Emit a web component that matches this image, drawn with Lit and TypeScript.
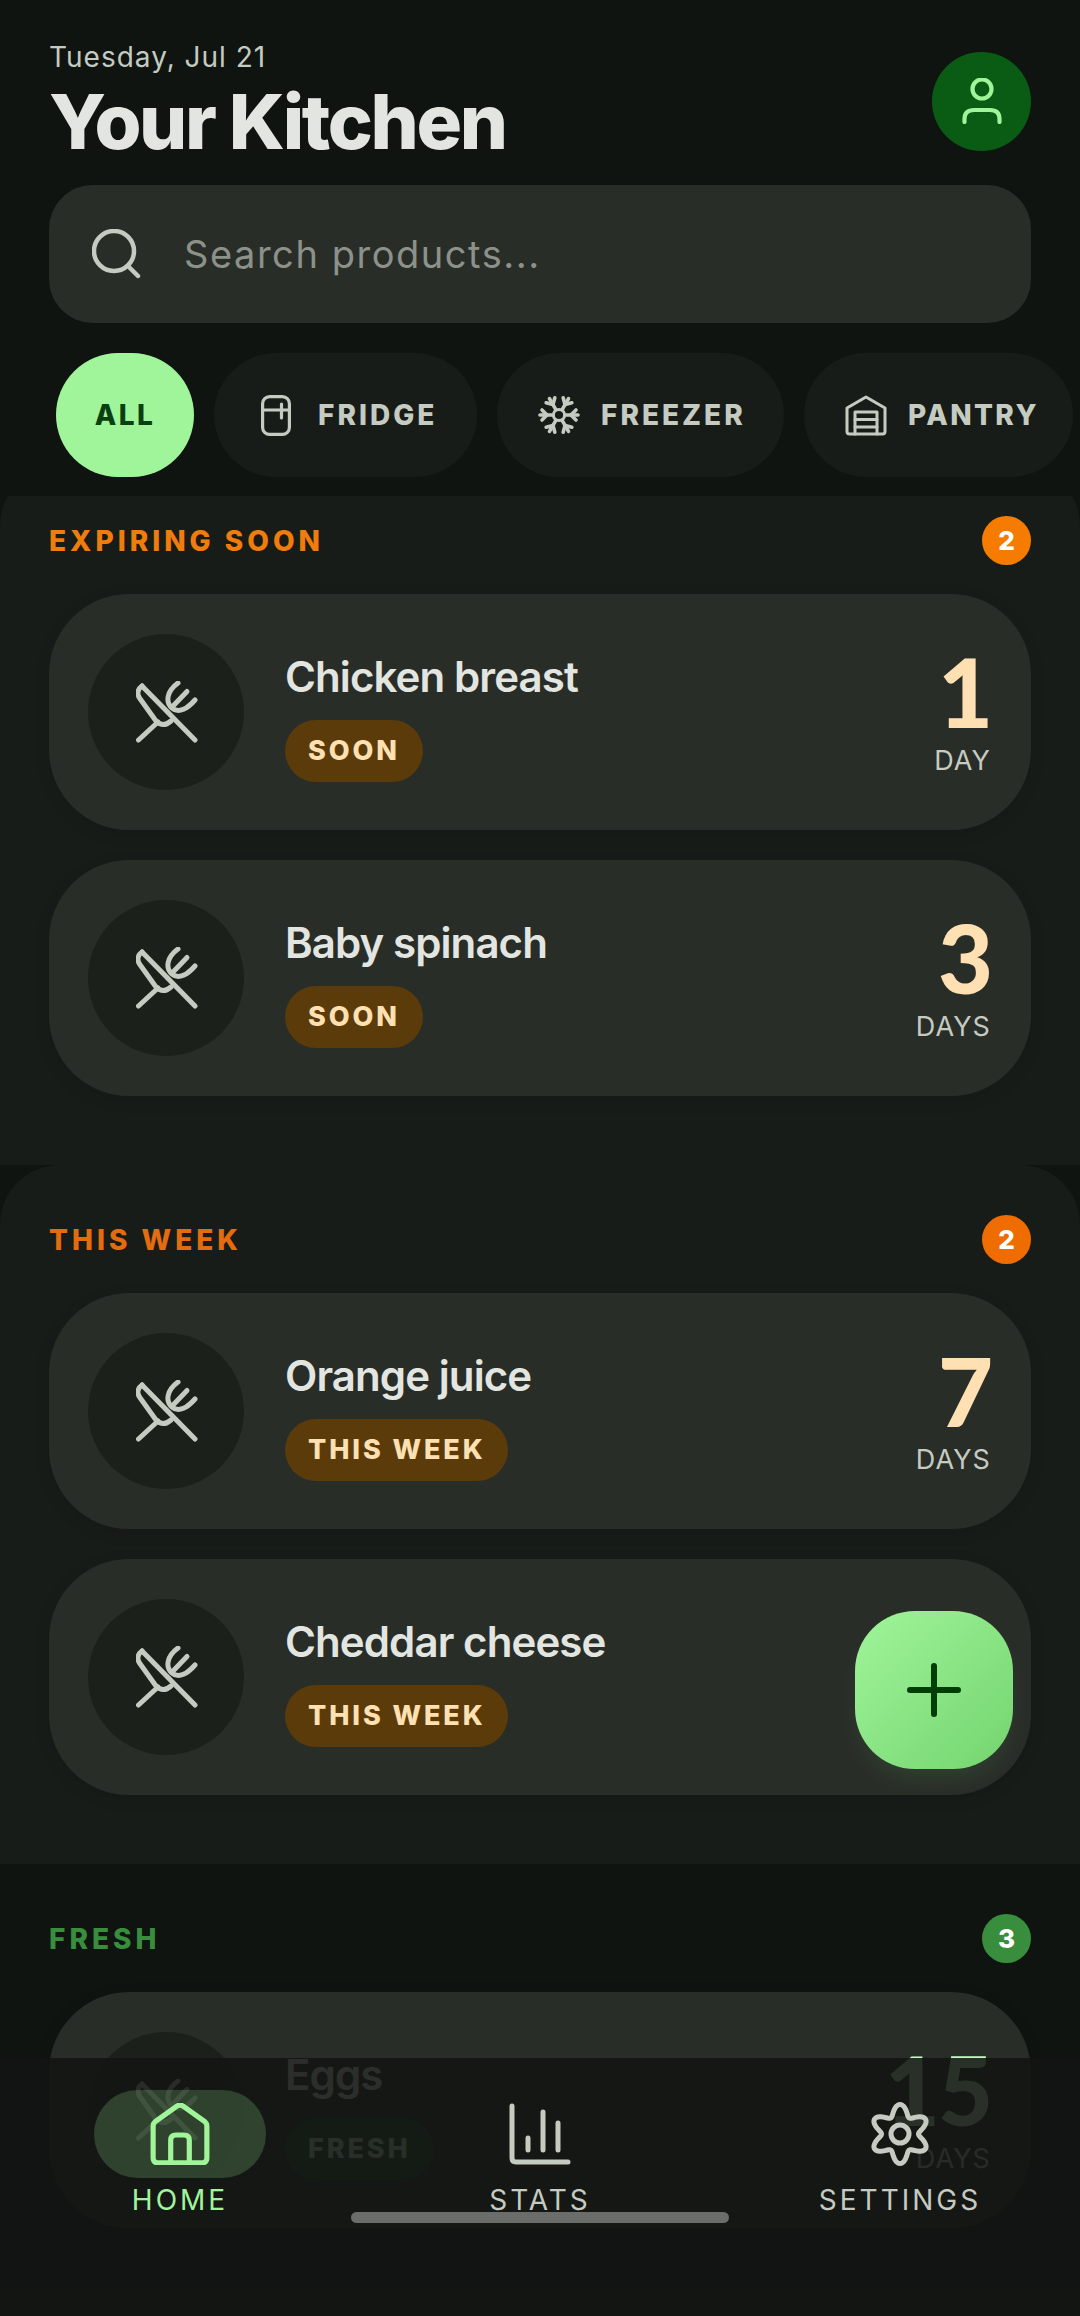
import { LitElement, html, css, svg } from 'lit'
import { customElement } from 'lit/decorators.js'
import { classMap } from 'lit/directives/class-map.js'

type Product = { name: string; tag: string; num: string; unit: string }
type Group = { title: string; tone: string; items: Product[]; count: number }

const groups: Group[] = [
  {
    title: 'EXPIRING SOON',
    tone: 'warn',
    count: 2,
    items: [
      { name: 'Chicken breast', tag: 'SOON', num: '1', unit: 'DAY' },
      { name: 'Baby spinach', tag: 'SOON', num: '3', unit: 'DAYS' },
    ],
  },
  {
    title: 'THIS WEEK',
    tone: 'week',
    count: 2,
    items: [
      { name: 'Orange juice', tag: 'THIS WEEK', num: '7', unit: 'DAYS' },
      { name: 'Cheddar cheese', tag: 'THIS WEEK', num: '5', unit: 'DAYS' },
    ],
  },
  {
    title: 'FRESH',
    tone: 'fresh',
    count: 3,
    items: [{ name: 'Eggs', tag: 'FRESH', num: '15', unit: 'DAYS' }],
  },
]

const fork = html`<svg class="fork" width="62" height="62" viewBox="0 0 62 62" fill="none" stroke="currentColor" stroke-width="5" stroke-linecap="round" stroke-linejoin="round">
  <path d="M6 5 L59 59" />
  <path d="M6 5 C1.5 8 1 13 3.5 17 L20 40 Q27 47 35 40" />
  <path d="M2.5 59 L22 41" />
  <path d="M42 2 C31 10 29 21 36 27 C43 33 52 27 59 19" />
  <path d="M51 10.5 L38 24" />
</svg>`

const fridge = html`<svg width="30" height="41" viewBox="0 0 30 41" fill="none" stroke="currentColor" stroke-width="3.2" stroke-linecap="round">
  <rect x="1.6" y="1.6" width="26.8" height="37.8" rx="7" />
  <path d="M1.6 15 H28.4" />
  <path d="M20.5 9 V23" />
</svg>`

const arms = [0, 60, 120, 180, 240, 300]
const snow = html`<svg width="42" height="42" viewBox="-21 -21 42 42" fill="none" stroke="currentColor" stroke-width="3.6" stroke-linecap="round">
  <circle r="5.6" stroke-width="3" />
  ${arms.map(
    (a) => svg`<g transform=${`rotate(${a + 90})`}>
      <path d="M0 -6 V-19" />
      <path d="M-5 -17 L0 -12 L5 -17" />
    </g>`,
  )}
</svg>`

const garage = html`<svg width="42" height="41" viewBox="0 0 42 41" fill="none" stroke="currentColor" stroke-width="3" stroke-linecap="round" stroke-linejoin="round">
  <path d="M2 13 L21 2 L40 13 V36.5 Q40 39 37.5 39 H4.5 Q2 39 2 36.5 Z" />
  <path d="M10 39 V17 H32 V39" />
  <path d="M10 24.5 H32 M10 32 H32" />
</svg>`

const home = html`<svg width="60" height="62" viewBox="0 0 58 60" fill="none" stroke="currentColor" stroke-width="5" stroke-linejoin="round" stroke-linecap="round">
  <path d="M3 22 C3 20 4 19 5 18 L26 3 Q29 1 32 3 L53 18 C54 19 55 20 55 22 V53 Q55 58 50 58 H8 Q3 58 3 53 Z" />
  <path d="M20 58 V36 Q20 31 25 31 H33 Q38 31 38 36 V58" />
</svg>`

const stats = html`<svg width="62" height="62" viewBox="0 0 62 62" fill="none" stroke="currentColor" stroke-width="5" stroke-linecap="round" stroke-linejoin="round">
  <path d="M3 3 V55 Q3 59 7 59 H59" />
  <path d="M19 35 V47" />
  <path d="M34 9 V47" />
  <path d="M49 20 V47" />
</svg>`

// six lobed outline, easier to generate than to write by hand
const gearPath = () => {
  const pts: string[] = []
  for (let i = 0; i < 180; i++) {
    const t = (i / 180) * Math.PI * 2
    const r = 24 + 5.5 * Math.cos(6 * t)
    pts.push(`${(r * Math.sin(t)).toFixed(2)} ${(-r * Math.cos(t)).toFixed(2)}`)
  }
  return `M${pts.join(' L')} Z`
}

const gear = html`<svg width="66" height="66" viewBox="-33 -33 66 66" fill="none" stroke="currentColor" stroke-width="5" stroke-linejoin="round">
  <path d=${gearPath()} />
  <circle r="9" />
</svg>`

@customElement('app-root')
export class AppRoot extends LitElement {
  static styles = css`
    :host {
      display: block;
      width: 1080px;
      height: 2316px;
      font-family: Inter, 'Noto Sans', sans-serif;
    }

    .page {
      position: relative;
      width: 1080px;
      height: 2316px;
      overflow: hidden;
      background: #0f1411;
      display: flex;
      flex-direction: column;
    }

    header {
      display: flex;
      justify-content: space-between;
      align-items: center;
      margin-top: 39px;
      padding: 0 49px;
    }

    .date {
      font-size: 28px;
      line-height: 36px;
      letter-spacing: 1px;
      color: #c5cbc0;
    }

    h1 {
      margin: 4px 0 0;
      font-size: 76px;
      line-height: 84px;
      font-weight: 800;
      letter-spacing: -2.4px;
      color: #e3e6e0;
    }

    .avatar {
      width: 99px;
      height: 99px;
      border-radius: 50%;
      background: #0a5c15;
      color: #a0f59a;
      display: flex;
      align-items: center;
      justify-content: center;
    }

    .search {
      display: flex;
      align-items: center;
      gap: 42px;
      height: 138px;
      margin: 22px 49px 0;
      padding: 0 43px;
      border-radius: 44px;
      background: #292d28;
      color: #c5cbc0;
    }

    .search span {
      font-size: 38px;
      letter-spacing: 1.55px;
      color: #8c918a;
    }

    .chips {
      display: flex;
      gap: 20px;
      height: 124px;
      margin-top: 30px;
      padding-left: 56px;
    }

    .chip {
      display: flex;
      align-items: center;
      gap: 20px;
      height: 124px;
      flex: none;
      box-sizing: border-box;
      padding-left: 40px;
      border-radius: 62px;
      background: #181c18;
      color: #c5cbc0;
      font-size: 28px;
      font-weight: 800;
      letter-spacing: 3px;
    }

    .chip.on {
      justify-content: center;
      padding-left: 0;
      background: #a0f59a;
      color: #0a3f0f;
      letter-spacing: 2.4px;
    }

    .ic {
      width: 44px;
      display: flex;
      justify-content: center;
    }

    .all {
      width: 138px;
    }

    .fridge {
      width: 263px;
    }

    .freezer {
      width: 287px;
    }

    .pantry {
      width: 269px;
      letter-spacing: 2.4px;
    }

    .scroll {
      flex: 1;
      min-height: 0;
      margin-top: 19px;
      overflow: hidden;
    }

    section {
      margin-top: 0;
      padding: 50px 49px 69px;
      border-radius: 60px 60px 0 0;
      background: #181c18;
    }

    section:first-child {
      margin-top: -30px;
    }

    section.fresh {
      background: transparent;
    }

    .head {
      display: flex;
      justify-content: space-between;
      align-items: center;
      height: 48px;
      margin-bottom: 30px;
      font-size: 28px;
      font-weight: 800;
      letter-spacing: 4px;
      color: #f07c0c;
    }

    .head span:first-child {
      margin-top: 2px;
    }

    .week .head {
      color: #e46c10;
    }

    .fresh .head {
      color: #388e3c;
    }

    .count {
      width: 49px;
      height: 49px;
      border-radius: 50%;
      background: #f57c00;
      color: #fff;
      display: flex;
      align-items: center;
      justify-content: center;
      font-size: 26px;
      letter-spacing: 0;
    }

    .week .count {
      background: #ef6c00;
    }

    .fresh .count {
      background: #388e3c;
    }

    .list {
      display: flex;
      flex-direction: column;
      gap: 30px;
    }

    .card {
      display: flex;
      align-items: center;
      height: 236px;
      box-sizing: border-box;
      padding: 0 40px 0 39px;
      border-radius: 80px;
      background: #292d28;
      box-shadow: 0 4px 16px rgba(0, 0, 0, 0.1);
    }

    .thumb {
      width: 156px;
      height: 156px;
      flex: none;
      border-radius: 50%;
      background: #1c201b;
      color: #c5cbc0;
      display: flex;
      align-items: center;
      justify-content: center;
    }

    .fork {
      margin-left: 2px;
    }

    .info {
      flex: 1;
      margin-left: 41px;
    }

    .name {
      font-size: 42px;
      line-height: 68px;
      font-weight: 600;
      letter-spacing: -0.9px;
      color: #e3e6e0;
    }

    .tag {
      display: inline-flex;
      align-items: center;
      height: 62px;
      margin-top: 9px;
      padding: 0 23px;
      border-radius: 31px;
      background: #5c3b0a;
      color: #ffe0b2;
      font-size: 27px;
      font-weight: 800;
      letter-spacing: 2.9px;
    }

    .fresh .tag {
      background: #1b4d20;
      color: #c8e6c9;
    }

    .left {
      margin-top: -4px;
      text-align: right;
    }

    .num {
      font-family: Lato, Inter, sans-serif;
      font-size: 95px;
      line-height: 100px;
      font-weight: 900;
      letter-spacing: -2px;
      color: #ffe0b2;
    }

    .fresh .num {
      color: #c8f7c5;
    }

    .unit {
      margin-top: 2px;
      font-size: 27px;
      line-height: 36px;
      letter-spacing: 1.1px;
      color: #c5cbc0;
    }

    .fab {
      position: absolute;
      left: 855px;
      top: 1611px;
      width: 158px;
      height: 158px;
      border-radius: 60px;
      background: linear-gradient(135deg, #a0f59a, #74d46f);
      box-shadow: 0 14px 24px -6px rgba(110, 220, 105, 0.12);
      color: #003d07;
      display: flex;
      align-items: center;
      justify-content: center;
    }

    nav {
      position: absolute;
      left: 0;
      right: 0;
      top: 2058px;
      bottom: 0;
      display: grid;
      grid-template-columns: repeat(3, 360px);
      align-content: start;
      padding-top: 32px;
      background: rgba(18, 21, 18, 0.88);
    }

    .tab {
      display: flex;
      flex-direction: column;
      align-items: center;
      color: #c5cbc0;
      font-size: 28px;
      line-height: 34px;
      letter-spacing: 3px;
    }

    .tab.on {
      color: #a0f59a;
    }

    .pill {
      width: 172px;
      height: 88px;
      margin-bottom: 5px;
      border-radius: 44px;
      display: flex;
      align-items: center;
      justify-content: center;
    }

    .on .pill {
      background: rgba(160, 245, 154, 0.2);
    }

    .grabber {
      position: absolute;
      left: 351px;
      top: 2212px;
      width: 378px;
      height: 11px;
      border-radius: 6px;
      background: #6b6d6a;
    }
  `

  private renderCard(p: Product) {
    return html`
      <div class="card">
        <div class="thumb">${fork}</div>
        <div class="info">
          <div class="name">${p.name}</div>
          <div class="tag">${p.tag}</div>
        </div>
        <div class="left">
          <div class="num">${p.num}</div>
          <div class="unit">${p.unit}</div>
        </div>
      </div>
    `
  }

  private renderGroup(g: Group) {
    return html`
      <section class=${classMap({ [g.tone]: true })}>
        <div class="head">
          <span>${g.title}</span>
          <span class="count">${g.count}</span>
        </div>
        <div class="list">${g.items.map((p) => this.renderCard(p))}</div>
      </section>
    `
  }

  render() {
    return html`
      <div class="page">
        <header>
          <div>
            <div class="date">Tuesday, Jul 21</div>
            <h1>Your Kitchen</h1>
          </div>
          <div class="avatar">
            <svg width="40" height="46" viewBox="0 0 40 46" fill="none" stroke="currentColor" stroke-width="4.2" stroke-linecap="round">
              <circle cx="20" cy="11" r="9.5" />
              <path d="M2.5 44 V41 Q2.5 32 12 32 H28 Q37.5 32 37.5 41 V44" />
            </svg>
          </div>
        </header>

        <div class="search">
          <svg width="50" height="50" viewBox="0 0 50 50" fill="none" stroke="currentColor" stroke-width="4.5" stroke-linecap="round">
            <circle cx="22" cy="22" r="20" />
            <path d="M36 37 L46 47" />
          </svg>
          <span>Search products...</span>
        </div>

        <div class="chips">
          <div class="chip on all">ALL</div>
          <div class="chip fridge"><span class="ic">${fridge}</span><span>FRIDGE</span></div>
          <div class="chip freezer"><span class="ic">${snow}</span><span>FREEZER</span></div>
          <div class="chip pantry"><span class="ic">${garage}</span><span>PANTRY</span></div>
        </div>

        <div class="scroll">${groups.map((g) => this.renderGroup(g))}</div>

        <div class="fab">
          <svg width="54" height="54" viewBox="0 0 54 54" fill="none" stroke="currentColor" stroke-width="6" stroke-linecap="round">
            <path d="M27 3 V51 M3 27 H51" />
          </svg>
        </div>

        <nav>
          <div class="tab on"><div class="pill">${home}</div>HOME</div>
          <div class="tab"><div class="pill">${stats}</div>STATS</div>
          <div class="tab"><div class="pill">${gear}</div>SETTINGS</div>
        </nav>
        <div class="grabber"></div>
      </div>
    `
  }
}
